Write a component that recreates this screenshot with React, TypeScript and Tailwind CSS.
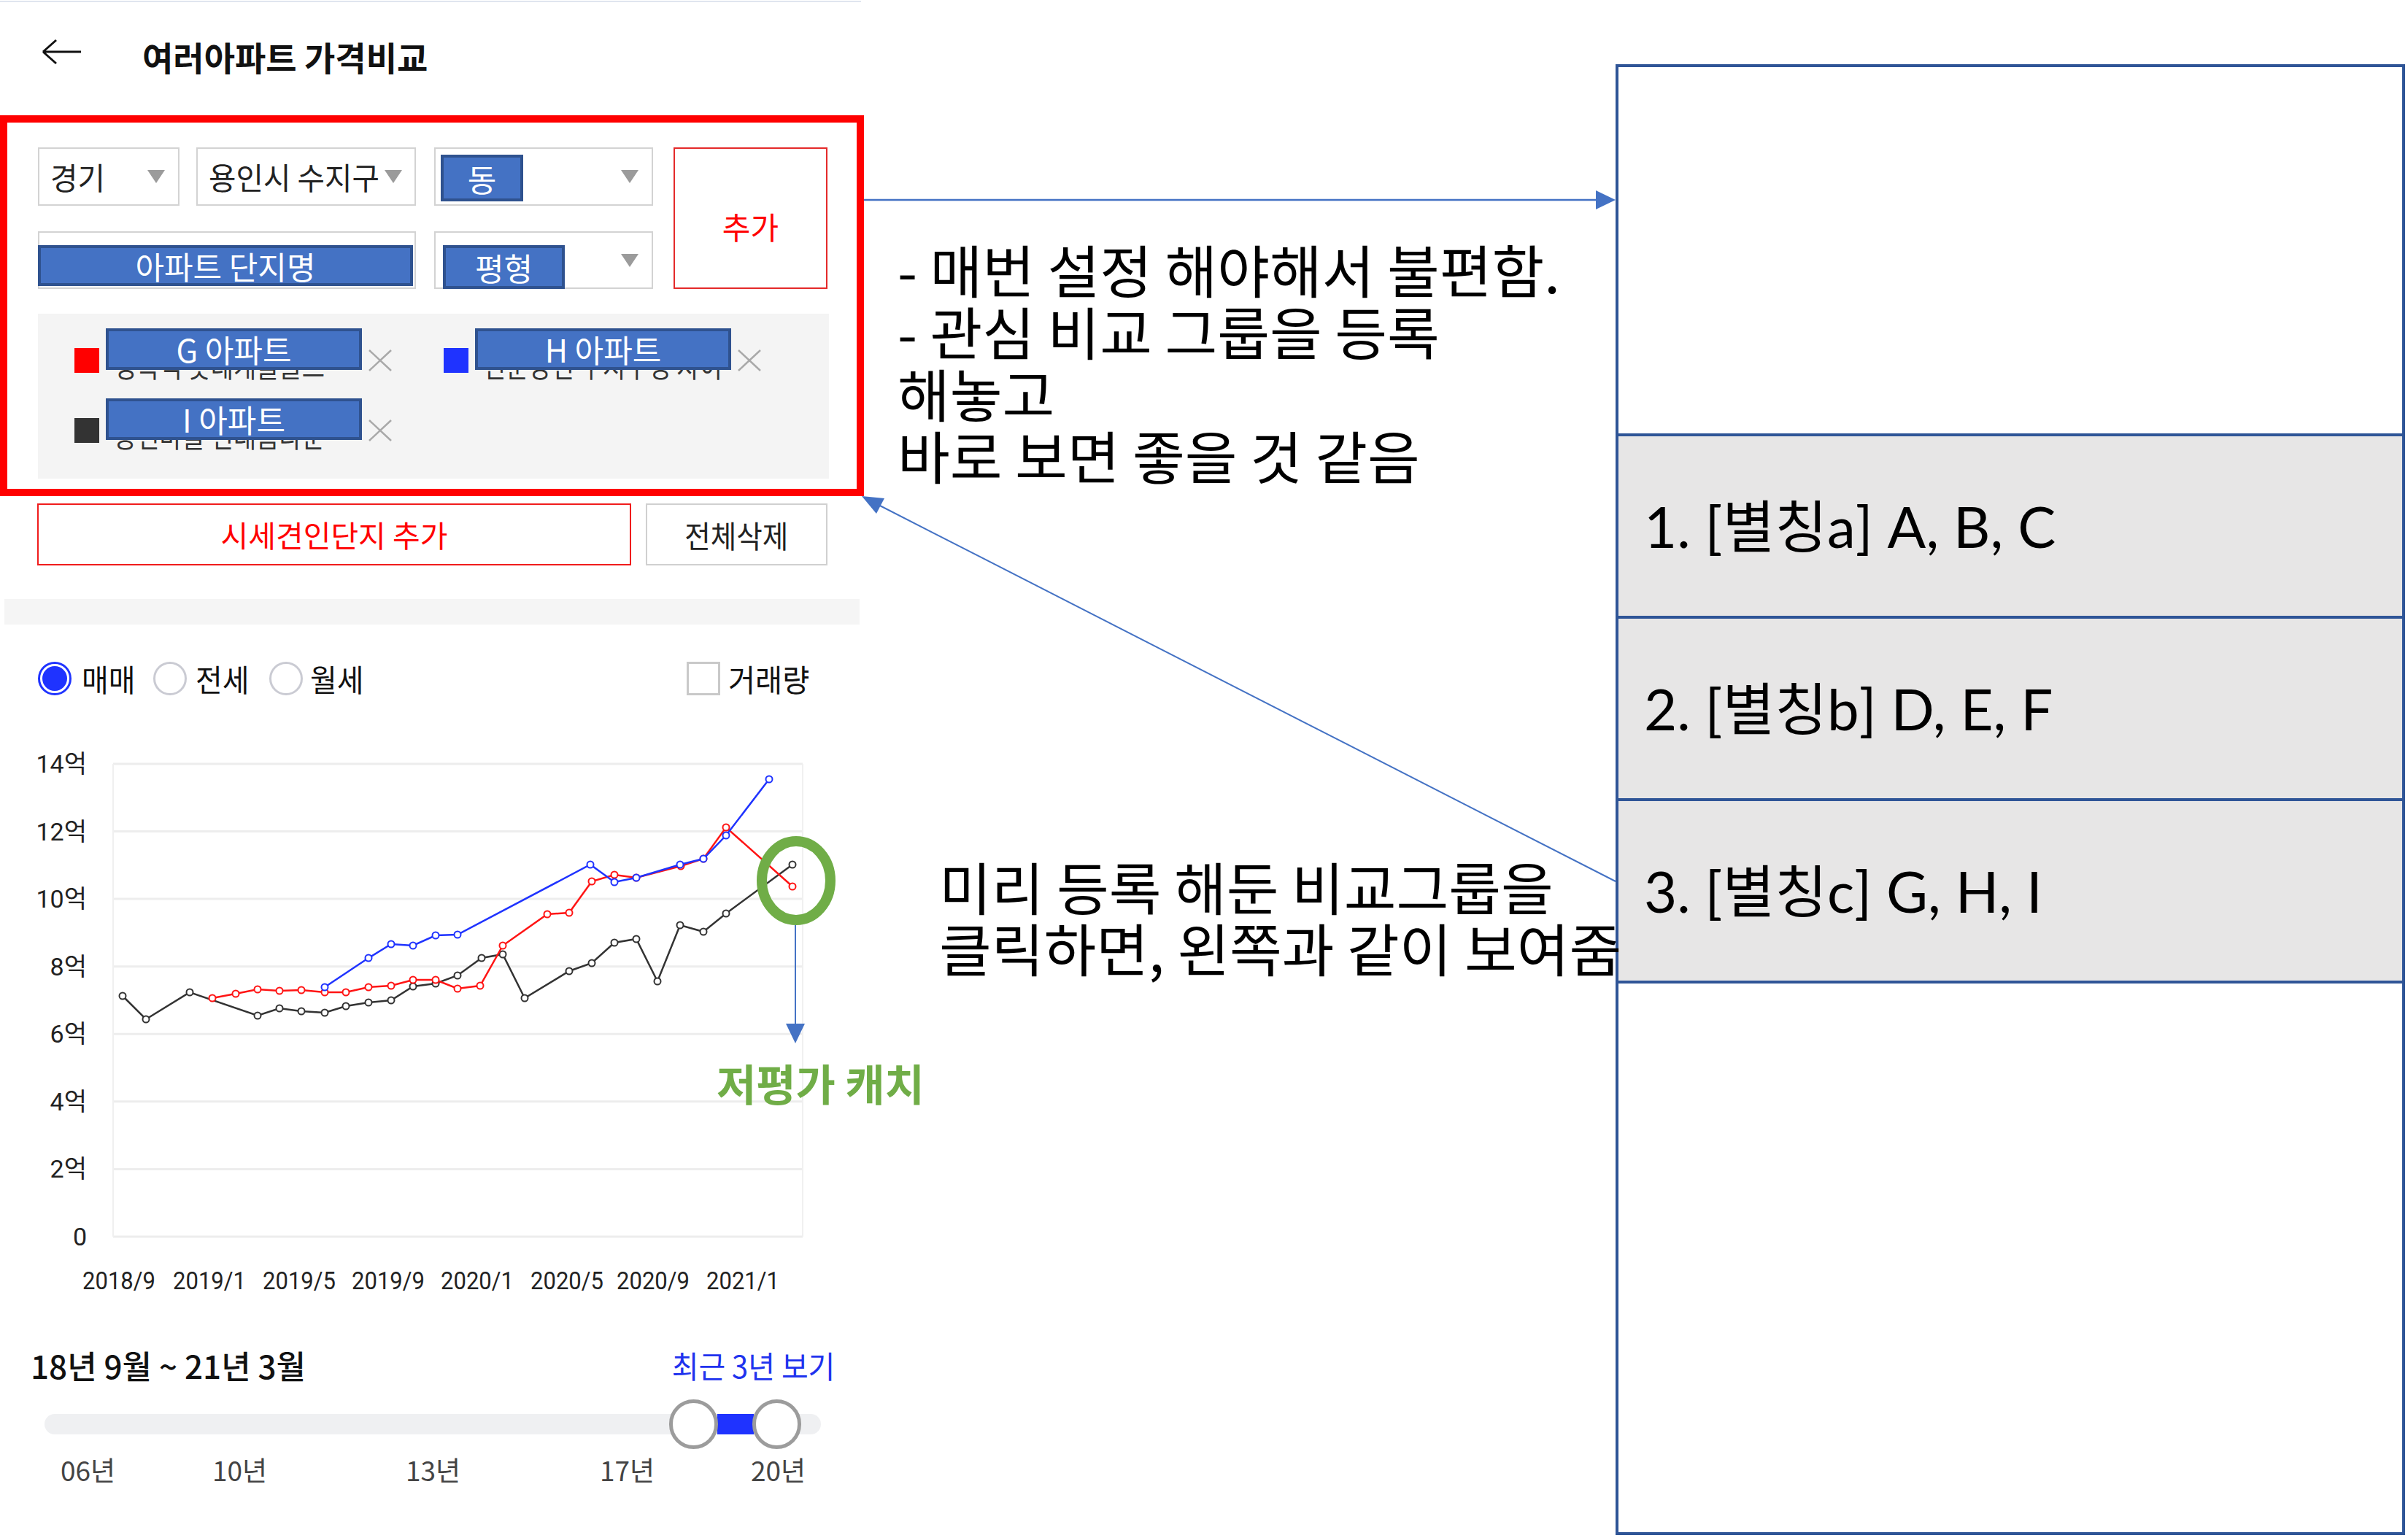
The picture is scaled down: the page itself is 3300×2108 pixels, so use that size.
import React from 'react';

const kr = "font-['Noto_Sans_CJK_KR',sans-serif]";

// slightly narrowed text, like the squeezed phone capture
const Sq: React.FC<{ children: React.ReactNode; cls?: string }> = ({ children, cls = 'scale-x-[0.97] origin-left' }) => (
  <span className={`inline-block whitespace-nowrap ${cls}`}>{children}</span>
);

const Caret = () => (
  <svg width="24" height="18" viewBox="0 0 24 18" className="ml-auto mr-[18px] shrink-0">
    <polygon points="0,0 24,0 12,18" fill="#9b9b9b" />
  </svg>
);

const XIcon = () => (
  <svg width="34" height="32" viewBox="0 0 34 32" className="ml-[8px] shrink-0">
    <path d="M2 2 L32 30 M32 2 L2 30" stroke="#a9a9a9" strokeWidth="2.5" fill="none" />
  </svg>
);

const Tag: React.FC<{ className: string; children: React.ReactNode }> = ({ className, children }) => (
  <div
    className={`absolute flex items-center justify-center bg-[#4472C4] border-[4px] border-[#2F528F] text-white text-[43px] leading-none whitespace-nowrap ${className}`}
  >
    {children}
  </div>
);

const Select: React.FC<{ w: string; label?: string; sq?: string; caret?: boolean; children?: React.ReactNode }> = ({
  w,
  label,
  sq,
  caret = true,
  children,
}) => (
  <div className={`relative h-full border-2 border-[#d3d3d3] bg-white flex items-center ${w}`}>
    {label && (
      <span className="pl-[15px] text-[42px] leading-none text-[#222]">
        <Sq cls={sq}>{label}</Sq>
      </span>
    )}
    {caret && <Caret />}
    {children}
  </div>
);

const Item: React.FC<{ color: string; name: string; under: string }> = ({ color, name, under }) => (
  <div className="flex items-center h-[60px]">
    <div className={`w-[34px] h-[34px] shrink-0 ${color}`} />
    <div className="relative ml-[9px] w-[351px] h-[60px] flex items-center pl-[11px] pt-[12px] text-[40px] leading-none text-[#333]">
      <Sq cls="scale-x-[0.85] origin-left">{under}</Sq>
      <Tag className="left-0 top-[-14px] w-[351px] h-[57px]">{name}</Tag>
    </div>
    <XIcon />
  </div>
);

const Radio: React.FC<{ on?: boolean }> = ({ on }) =>
  on ? (
    <div className="w-[46px] h-[46px] rounded-full border-[3px] border-[#1f33ff] p-[3px] shrink-0">
      <div className="w-full h-full rounded-full bg-[#1f33ff]" />
    </div>
  ) : (
    <div className="w-[46px] h-[46px] rounded-full border-[3px] border-[#cacbd3] bg-white shrink-0" />
  );

const black = [
  [168, 1365], [200, 1397], [260, 1360], [353, 1392], [383, 1382], [413, 1386], [445, 1388], [474, 1379],
  [505, 1374], [536, 1371], [566, 1352], [597, 1348], [627, 1337], [660, 1313], [689, 1308], [719, 1368],
  [780, 1331], [811, 1320], [842, 1292], [872, 1287], [901, 1345], [932, 1268], [964, 1277], [995, 1252],
  [1086, 1185],
];
const red = [
  [291, 1368], [323, 1362], [353, 1356], [383, 1358], [413, 1357], [445, 1360], [474, 1360], [505, 1353],
  [536, 1351], [566, 1343], [597, 1343], [627, 1355], [658, 1351], [689, 1296], [750, 1253], [780, 1251],
  [811, 1208], [842, 1199], [872, 1203], [933, 1187], [964, 1177], [995, 1134], [1086, 1215],
];
const blue = [
  [445, 1353], [505, 1313], [536, 1294], [566, 1296], [597, 1282], [627, 1281], [809, 1185], [842, 1209],
  [872, 1203], [932, 1185], [964, 1177], [995, 1145], [1054, 1068],
];

const Series: React.FC<{ pts: number[][]; color: string }> = ({ pts, color }) => (
  <g>
    <polyline points={pts.map((p) => p.join(',')).join(' ')} fill="none" stroke={color} strokeWidth="2.5" />
    {pts.map((p, i) => (
      <circle key={i} cx={p[0]} cy={p[1]} r="4.5" fill="#fff" stroke={color} strokeWidth="2" />
    ))}
  </g>
);

const Chart = () => {
  const levels = [14, 12, 10, 8, 6, 4, 2, 0];
  const y = (v: number) => 1695 - v * 46.29;
  const months = ['2018/9', '2019/1', '2019/5', '2019/9', '2020/1', '2020/5', '2020/9', '2021/1'];
  const mx = [163, 287, 410, 532, 654, 777, 895, 1018];
  return (
    <svg width="1184" height="837" viewBox="0 953 1184 837" className="block">
      {levels.map((v) => (
        <line key={v} x1={155} x2={1100} y1={y(v)} y2={y(v)} stroke="#ededed" strokeWidth="3" />
      ))}
      <line x1={155} x2={155} y1={1047} y2={1695} stroke="#f0f0f0" strokeWidth="2" />
      <line x1={1100} x2={1100} y1={1047} y2={1695} stroke="#f0f0f0" strokeWidth="2" />
      {levels.map((v) => (
        <text
          key={v}
          x={119}
          y={y(v) + 12}
          textAnchor="end"
          fontSize="34"
          fill="#222"
          fontFamily="Roboto, 'Noto Sans CJK KR', sans-serif"
        >
          {v === 0 ? '0' : `${v}억`}
        </text>
      ))}
      {months.map((m, i) => (
        <text
          key={m}
          x={mx[i]}
          y={1767}
          textAnchor="middle"
          fontSize="34"
          fill="#222"
          textLength="100"
          lengthAdjust="spacingAndGlyphs"
          fontFamily="Roboto, 'Noto Sans CJK KR', sans-serif"
        >
          {m}
        </text>
      ))}
      <Series pts={black} color="#333333" />
      <Series pts={red} color="#ff1414" />
      <Series pts={blue} color="#1f33ff" />
    </svg>
  );
};

const Overlay = () => (
  <svg className="absolute left-0 top-0 pointer-events-none z-20" width="3300" height="2108" viewBox="0 0 3300 2108">
    {/* red box -> group list */}
    <line x1={1184} y1={274} x2={2190} y2={274} stroke="#4472C4" strokeWidth="2.5" />
    <polygon points="2187,261 2214,274 2187,287" fill="#4472C4" />
    {/* group row -> red box */}
    <line x1={2214} y1={1208} x2={1200} y2={690} stroke="#4472C4" strokeWidth="2" />
    <polygon points="1181,680 1212,683 1201,704" fill="#4472C4" />
    {/* low-price catch */}
    <ellipse cx={1091} cy={1207} rx={47} ry={54} fill="none" stroke="#70AD47" strokeWidth="14" />
    <line x1={1090} y1={1268} x2={1090} y2={1406} stroke="#4472C4" strokeWidth="2" />
    <polygon points="1077,1403 1103,1403 1090,1430" fill="#4472C4" />
    <text
      x={982}
      y={1509}
      fontSize="59"
      fontWeight="700"
      fill="#70AD47"
      fontFamily="'Noto Sans CJK KR', sans-serif"
    >
      저평가 캐치
    </text>
  </svg>
);

const LeftPanel = () => (
  <div className={`w-[1184px] shrink-0 flex flex-col ${kr}`}>
    <div className="mt-[1px] h-[2px] w-[1180px] bg-[#e0e5ef]" />

    <div className="h-[147px] flex items-center pl-[57px]">
      <svg width="56" height="36" viewBox="0 0 56 36" className="shrink-0 mb-[12px]">
        <path d="M2 18 H54 M2 18 L20 2 M2 18 L20 34" stroke="#111" strokeWidth="3" fill="none" />
      </svg>
      <div className="ml-[82px] text-[46px] font-bold leading-none text-[#111]">여러아파트 가격비교</div>
    </div>

    <div className="mt-[8px] h-[522px] border-[10px] border-[#ff0000] pt-[34px] pl-[42px]">
      <div className="flex">
        <div className="w-[843px] flex flex-col">
          <div className="h-[80px] flex">
            <Select w="w-[194px]" label="경기" />
            <Select w="w-[301px] ml-[23px]" label="용인시 수지구" />
            <Select w="w-[300px] ml-[25px]">
              <Tag className="left-[7px] top-[8px] w-[113px] h-[64px]">동</Tag>
            </Select>
          </div>
          <div className="h-[79px] mt-[35px] flex">
            <Select w="w-[518px]" caret={false}>
              <Tag className="left-[-2px] top-[17px] w-[514px] h-[56px]">아파트 단지명</Tag>
            </Select>
            <Select w="w-[300px] ml-[25px]">
              <Tag className="left-[10px] top-[17px] w-[167px] h-[60px]">평형</Tag>
            </Select>
          </div>
        </div>
        <div className="ml-[28px] w-[211px] h-[194px] border-2 border-[#e42a2a] flex items-center justify-center pt-[22px] text-[42px] leading-none text-[#ff0000]">
          추가
        </div>
      </div>

      <div className="mt-[34px] w-[1084px] h-[226px] bg-[#f4f4f4] pt-[34px] pl-[50px]">
        <div className="grid grid-cols-[506px_506px] gap-y-[36px]">
          <Item color="bg-[#ff0000]" name="G 아파트" under="성복역 롯데캐슬골드" />
          <Item color="bg-[#1f33ff]" name="H 아파트" under="신분당선 수지구청 자이" />
          <Item color="bg-[#333333]" name="I 아파트" under="동천마을 현대홈타운" />
        </div>
      </div>
    </div>

    <div className="mt-[10px] pl-[51px] flex">
      <div className="w-[814px] h-[85px] border-2 border-[#f01c1c] flex items-center justify-center text-[41px] leading-none text-[#ff0000]">
        시세견인단지 추가
      </div>
      <div className="ml-[20px] w-[249px] h-[85px] border-2 border-[#d0d0d0] flex items-center justify-center text-[42px] leading-none text-[#222]">
        <Sq cls="scale-x-[0.92] origin-center">전체삭제</Sq>
      </div>
    </div>

    <div className="mt-[46px] ml-[6px] w-[1172px] h-[35px] bg-[#f5f5f5]" />

    <div className="mt-[51px] h-[46px] pl-[52px] flex items-center text-[42px] leading-none text-[#111]">
      <div className="w-[158px] flex items-center">
        <Radio on />
        <span className="ml-[14px]">
          <Sq cls="scale-x-[0.95] origin-left">매매</Sq>
        </span>
      </div>
      <div className="w-[159px] flex items-center">
        <Radio />
        <span className="ml-[12px]">
          <Sq cls="scale-x-[0.95] origin-left">전세</Sq>
        </span>
      </div>
      <div className="w-[572px] flex items-center">
        <Radio />
        <span className="ml-[10px]">
          <Sq cls="scale-x-[0.95] origin-left">월세</Sq>
        </span>
      </div>
      <div className="flex items-center">
        <div className="w-[46px] h-[46px] border-[3px] border-[#c9c9c9] bg-white" />
        <span className="ml-[11px]">
          <Sq cls="scale-x-[0.96] origin-left">거래량</Sq>
        </span>
      </div>
    </div>

    <Chart />

    <div className="mt-[56px] h-[50px] pl-[42px] pr-[40px] flex items-center justify-between leading-none">
      <span className="text-[44px] font-medium text-[#111]">18년 9월 ~ 21년 3월</span>
      <span className="text-[42px] text-[#1f33ee]">
        <Sq cls="scale-x-[0.95] origin-right">최근 3년 보기</Sq>
      </span>
    </div>

    <div className="mt-[22px] ml-[61px] w-[1064px] h-[68px] flex items-center">
      <div className="relative w-full h-[28px] rounded-full bg-[#eff0f2]">
        <div className="absolute left-[922px] top-0 w-[50px] h-[28px] bg-[#1f33ff]" />
        <div className="absolute left-[856px] top-[-20px] w-[67px] h-[68px] rounded-full border-[5px] border-[#9c9c9c] bg-white" />
        <div className="absolute left-[970px] top-[-20px] w-[67px] h-[68px] rounded-full border-[5px] border-[#9c9c9c] bg-white" />
      </div>
    </div>

    <div className="mt-[10px] h-[36px] pl-[83px] flex text-[37px] leading-[36px] text-[#444]">
      <div className="w-[208px]">06년</div>
      <div className="w-[265px]">10년</div>
      <div className="w-[266px]">13년</div>
      <div className="w-[207px]">17년</div>
      <div>20년</div>
    </div>
  </div>
);

const MiddleNotes = () => (
  <div className={`relative z-10 w-[1030px] shrink-0 flex flex-col text-black whitespace-nowrap ${kr}`}>
    <div className="mt-[326px] pl-[46px] text-[78px] leading-[85px]">
      <div>- 매번 설정 해야해서 불편함.</div>
      <div>- 관심 비교 그룹을 등록</div>
      <div>해놓고</div>
      <div>바로 보면 좋을 것 같음</div>
    </div>
    <div className="mt-[506px] pl-[103px] text-[78px] leading-[84px]">
      <div>미리 등록 해둔 비교그룹을</div>
      <div>클릭하면, 왼쪽과 같이 보여줌</div>
    </div>
  </div>
);

const groups = ['1. [별칭a] A, B, C', '2. [별칭b] D, E, F', '3. [별칭c] G, H, I'];

const GroupPanel = () => (
  <div className="mt-[88px] w-[1082px] h-[2016px] shrink-0 border-4 border-[#2F5597] flex flex-col font-['Lato','Noto_Sans_CJK_KR',sans-serif]">
    <div className="h-[502px] bg-white" />
    {groups.map((g) => (
      <div
        key={g}
        className="h-[250px] border-t-4 border-[#2F5597] bg-[#E7E6E6] flex items-center pl-[35px] text-[78px] text-black whitespace-nowrap"
      >
        {g}
      </div>
    ))}
    <div className="flex-1 border-t-4 border-[#2F5597] bg-white" />
  </div>
);

export default function App() {
  return (
    <div className="relative w-[3300px] h-[2108px] bg-white flex overflow-hidden">
      <LeftPanel />
      <MiddleNotes />
      <GroupPanel />
      <Overlay />
    </div>
  );
}
